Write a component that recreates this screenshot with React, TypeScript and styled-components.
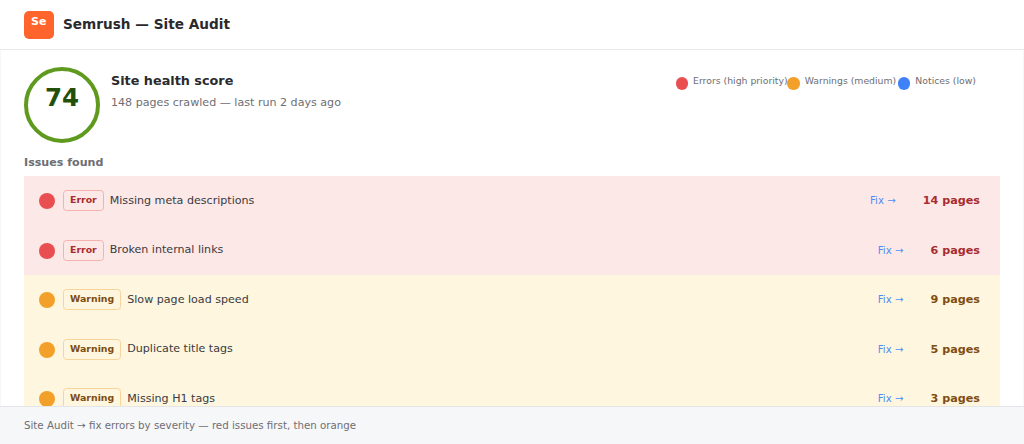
import React from 'react';
import styled, { createGlobalStyle } from 'styled-components';

const GlobalStyle = createGlobalStyle`
  html, body {
    margin: 0;
    padding: 0;
    height: 100%;
    overflow: hidden;
    background: #f6f7f9;
  }
  * { box-sizing: border-box; }
`;

const Page = styled.div`
  display: flex;
  flex-direction: column;
  width: 1024px;
  height: 444px;
  font-family: "DejaVu Sans", sans-serif;
  color: #2a2a2e;
  overflow: hidden;
`;

const Header = styled.header`
  display: flex;
  align-items: center;
  gap: 9.5px;
  height: 50px;
  flex: none;
  padding: 0 24px 2px;
  background: #fff;
  border-bottom: 1px solid #e8e9ec;
`;

const Logo = styled.div`
  width: 29.5px;
  height: 28px;
  margin-top: 2px;
  border-radius: 5px;
  background: #ff642d;
  color: #fff;
  font-size: 11px;
  font-weight: 700;
  line-height: 21px;
  text-align: center;
`;

const Title = styled.h1`
  margin: 0;
  font-size: 13.65px;
  font-weight: 700;
`;

const Panel = styled.main`
  flex: 1;
  min-height: 0;
  overflow: hidden;
  margin: 0 1px;
  padding: 17px 23px 0;
  background: #fff;
`;

const Summary = styled.section`
  display: flex;
  align-items: flex-start;
`;

const Score = styled.div`
  display: flex;
  align-items: center;
  justify-content: center;
  width: 76px;
  height: 76px;
  flex: none;
  padding-bottom: 16px;
  border: 4px solid #5f9a1f;
  border-radius: 50%;
  color: #234f0b;
  font-size: 24.5px;
  font-weight: 700;
`;

const ScoreText = styled.div`
  margin-left: 11px;
  padding-top: 6px;
`;

const ScoreTitle = styled.div`
  font-size: 12.8px;
  font-weight: 700;
  line-height: 16px;
`;

const ScoreMeta = styled.div`
  margin-top: 6px;
  color: #6e6e73;
  font-size: 11.1px;
  line-height: 16px;
`;

const Legend = styled.div`
  display: grid;
  grid-template-columns: 111.6px 110.7px auto;
  margin-left: auto;
  margin-right: 24px;
  padding-top: 8px;
`;

const LegendItem = styled.div`
  display: flex;
  align-items: flex-start;
  gap: 5px;
  color: #6e6e73;
  font-size: 9.3px;
  line-height: 12px;
  white-space: nowrap;
`;

const LegendDot = styled.span<{ $color: string }>`
  width: 12.5px;
  height: 12.5px;
  flex: none;
  margin-top: 2px;
  border-radius: 50%;
  background: ${p => p.$color};
`;

const SectionLabel = styled.div`
  margin: 12px 0 5px;
  color: #6e6e73;
  font-size: 11.1px;
  font-weight: 700;
  line-height: 16px;
`;

const List = styled.div`
  display: flex;
  flex-direction: column;
`;

type Severity = 'error' | 'warning';

const tones = {
  error: { bg: '#fde8e8', dot: '#e94f51', border: '#f5b0b0', text: '#a82c2e' },
  warning: { bg: '#fef6de', dot: '#f2a029', border: '#f8d49a', text: '#7f4d11' },
};

const Row = styled.div<{ $sev: Severity }>`
  display: flex;
  align-items: center;
  height: 49.5px;
  flex: none;
  padding: 0 20px 0 15px;
  background: ${p => tones[p.$sev].bg};
  font-size: 11.1px;
`;

const Dot = styled.span<{ $sev: Severity }>`
  width: 16px;
  height: 16px;
  margin-top: 1px;
  margin-right: 8px;
  flex: none;
  border-radius: 50%;
  background: ${p => tones[p.$sev].dot};
`;

const Badge = styled.span<{ $sev: Severity }>`
  margin-right: 6px;
  padding: 0 6px;
  height: 21px;
  border: 1px solid ${p => tones[p.$sev].border};
  border-radius: 3.5px;
  color: ${p => tones[p.$sev].text};
  font-size: 9.4px;
  font-weight: 700;
  line-height: 17px;
`;

const IssueName = styled.span`
  flex: 1;
  color: #3a3a3e;
  line-height: 16px;
`;

const FixLink = styled.a`
  margin-right: 27px;
  color: #4f8ef7;
  font-size: 10.2px;
  text-decoration: none;
`;

const Count = styled.span<{ $sev: Severity }>`
  color: ${p => tones[p.$sev].text};
  font-size: 11.2px;
  font-weight: 700;
`;

const Footer = styled.footer`
  flex: none;
  height: 38px;
  padding: 0 24px;
  background: #f6f7f9;
  border-top: 1px solid #e4e5e9;
  color: #6e6e73;
  font-size: 10.25px;
  line-height: 36px;
`;

const legend = [
  { label: 'Errors (high priority)', color: '#e94f51' },
  { label: 'Warnings (medium)', color: '#f2a029' },
  { label: 'Notices (low)', color: '#3f82f7' },
];

const issues: { sev: Severity; label: string; name: string; count: string }[] = [
  { sev: 'error', label: 'Error', name: 'Missing meta descriptions', count: '14 pages' },
  { sev: 'error', label: 'Error', name: 'Broken internal links', count: '6 pages' },
  { sev: 'warning', label: 'Warning', name: 'Slow page load speed', count: '9 pages' },
  { sev: 'warning', label: 'Warning', name: 'Duplicate title tags', count: '5 pages' },
  { sev: 'warning', label: 'Warning', name: 'Missing H1 tags', count: '3 pages' },
];

const App: React.FC = () => (
  <Page>
    <GlobalStyle />
    <Header>
      <Logo>Se</Logo>
      <Title>Semrush — Site Audit</Title>
    </Header>
    <Panel>
      <Summary>
        <Score>74</Score>
        <ScoreText>
          <ScoreTitle>Site health score</ScoreTitle>
          <ScoreMeta>148 pages crawled — last run 2 days ago</ScoreMeta>
        </ScoreText>
        <Legend>
          {legend.map(item => (
            <LegendItem key={item.label}>
              <LegendDot $color={item.color} />
              {item.label}
            </LegendItem>
          ))}
        </Legend>
      </Summary>
      <SectionLabel>Issues found</SectionLabel>
      <List>
        {issues.map(issue => (
          <Row key={issue.name} $sev={issue.sev}>
            <Dot $sev={issue.sev} />
            <Badge $sev={issue.sev}>{issue.label}</Badge>
            <IssueName>{issue.name}</IssueName>
            <FixLink href="#">Fix →</FixLink>
            <Count $sev={issue.sev}>{issue.count}</Count>
          </Row>
        ))}
      </List>
    </Panel>
    <Footer>Site Audit → fix errors by severity — red issues first, then orange</Footer>
  </Page>
);

export default App;
